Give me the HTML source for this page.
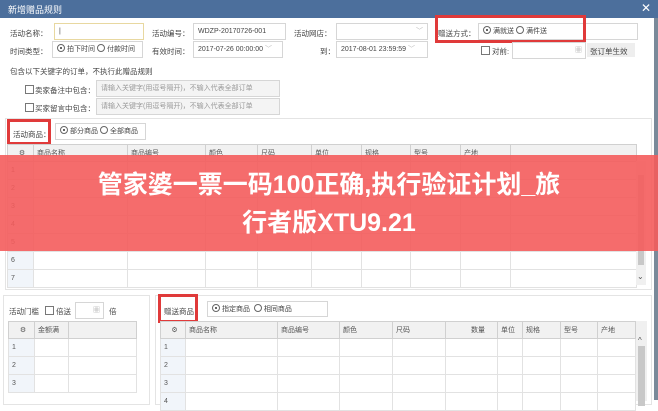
<!DOCTYPE html><html><head><meta charset="utf-8"><style>
*{margin:0;padding:0;box-sizing:border-box}
body{width:658px;height:400px;overflow:hidden;background:#fff;font-family:"Liberation Sans","Noto Sans CJK SC",sans-serif;font-size:7.5px;color:#444;position:relative}
.a{position:absolute;white-space:nowrap}
.in{position:absolute;border:1px solid #d6d6d6;background:#fff;height:17px;line-height:15px;padding-left:4px;font-size:7px;white-space:nowrap;overflow:hidden}
.g{background:#f4f4f4;color:#999}
.red{position:absolute;border:3px solid #e03a3a}
.rb{display:inline-block;width:8px;height:8px;border:1px solid #666;border-radius:50%;vertical-align:-1px;margin-right:2px;position:relative}
.rb.on:after{content:"";position:absolute;left:2px;top:2px;width:2px;height:2px;background:#333;border-radius:50%}
.cb{position:absolute;width:9px;height:9px;border:1px solid #777;background:#fff}
table{position:absolute;border-collapse:collapse;background:#fff;table-layout:fixed}
td{border:1px solid #e2e2e2;height:18px;font-size:7px;padding-left:3px;color:#555;white-space:nowrap;overflow:hidden}
tr.h td{background:#f1f1f1;border-color:#d0d0d0;height:17px}
td.n{background:#f1f5fa}
.sb{position:absolute;background:#f0f0f0}
.sb i{position:absolute;left:2px;right:2px;background:#c8c8c8}
</style></head><body>
<div class="a" style="left:0;top:0;width:658px;height:18px;background:#4c6f9c"></div>
<div class="a" style="left:8px;top:3px;color:#fff;font-size:9px">新增赠品规则</div>
<div class="a" style="left:641px;top:1px;color:#fff;font-size:12px">✕</div>
<div class="a" style="left:654px;top:18px;width:4px;height:382px;background:#7a8a9a"></div>

<div class="a" style="left:10px;top:28px">活动名称：</div>
<div class="in" style="left:54px;top:23px;width:90px;border-color:#e8d8a0">|</div>
<div class="a" style="left:152px;top:28px">活动编号：</div>
<div class="in" style="left:193px;top:23px;width:93px">WDZP-20170726-001</div>
<div class="a" style="left:294px;top:28px">活动网店：</div>
<div class="in" style="left:336px;top:23px;width:92px;text-align:right;color:#bbb;padding-right:4px">﹀</div>
<div class="a" style="left:438px;top:28px">赠送方式：</div>
<div class="in" style="left:478px;top:23px;width:160px"><span class="rb on"></span>满就送 <span class="rb"></span>满件送</div>
<div class="red" style="left:435px;top:15px;width:151px;height:28px"></div>

<div class="a" style="left:10px;top:46px">时间类型：</div>
<div class="in" style="left:52px;top:41px;width:91px"><span class="rb on"></span>拍下时间 <span class="rb"></span>付款时间</div>
<div class="a" style="left:152px;top:46px">有效时间：</div>
<div class="in" style="left:193px;top:41px;width:90px">2017-07-26 00:00:00 <span style="color:#bbb">﹀</span></div>
<div class="a" style="left:320px;top:46px">到：</div>
<div class="in" style="left:336px;top:41px;width:92px">2017-08-01 23:59:59 <span style="color:#bbb">﹀</span></div>
<div class="cb" style="left:481px;top:46px"></div>
<div class="a" style="left:492px;top:46px">对前:</div>
<div class="in" style="left:512px;top:42px;width:74px;text-align:right;color:#aaa;padding-right:3px">▦</div>
<div class="a" style="left:587px;top:43px;width:48px;height:14px;background:#eee"></div>
<div class="a" style="left:590px;top:46px">张订单生效</div>

<div class="a" style="left:10px;top:66px">包含以下关键字的订单，不执行此赠品规则</div>
<div class="cb" style="left:25px;top:85px"></div>
<div class="a" style="left:35px;top:85px">卖家备注中包含：</div>
<div class="in g" style="left:96px;top:80px;width:184px">请输入关键字(用逗号隔开)，不输入代表全部订单</div>
<div class="cb" style="left:25px;top:103px"></div>
<div class="a" style="left:35px;top:103px">买家留言中包含：</div>
<div class="in g" style="left:96px;top:98px;width:184px">请输入关键字(用逗号隔开)，不输入代表全部订单</div>

<div class="a" style="left:5px;top:118px;width:647px;height:172px;border:1px solid #e4e4e4"></div>
<div class="a" style="left:13px;top:129px">活动商品：</div>
<div class="in" style="left:55px;top:123px;width:91px"><span class="rb on"></span>部分商品 <span class="rb"></span>全部商品</div>
<div class="red" style="left:7px;top:119px;width:44px;height:26px"></div>

<table style="left:7px;top:144px;width:630px">
<tr class="h"><td style="width:26px;text-align:center;color:#555">⚙</td><td style="width:94px">商品名称</td><td style="width:78px">商品编号</td><td style="width:52px">颜色</td><td style="width:54px">尺码</td><td style="width:50px">单位</td><td style="width:49px">规格</td><td style="width:50px">型号</td><td style="width:50px">产地</td><td></td></tr>
<tr><td class="n">1</td><td></td><td></td><td></td><td></td><td></td><td></td><td></td><td></td><td></td></tr>
<tr><td class="n">2</td><td></td><td></td><td></td><td></td><td></td><td></td><td></td><td></td><td></td></tr>
<tr><td class="n">3</td><td></td><td></td><td></td><td></td><td></td><td></td><td></td><td></td><td></td></tr>
<tr><td class="n">4</td><td></td><td></td><td></td><td></td><td></td><td></td><td></td><td></td><td></td></tr>
<tr><td class="n">5</td><td></td><td></td><td></td><td></td><td></td><td></td><td></td><td></td><td></td></tr>
<tr><td class="n">6</td><td></td><td></td><td></td><td></td><td></td><td></td><td></td><td></td><td></td></tr>
<tr><td class="n">7</td><td></td><td></td><td></td><td></td><td></td><td></td><td></td><td></td><td></td></tr>
</table>
<div class="sb" style="left:636px;top:161px;width:10px;height:124px"><i style="top:14px;height:90px"></i></div>
<div class="a" style="left:637px;top:272px;font-size:8px;color:#555">⌄</div>

<div class="a" style="left:0;top:155px;width:658px;height:96px;background:rgba(244,92,92,0.9)"></div>
<div class="a" style="left:0;top:166px;width:658px;text-align:center;color:#fff;font-weight:bold;font-size:25px;line-height:38px">管家婆一票一码100正确,执行验证计划_旅<br>行者版XTU9.21</div>

<div class="a" style="left:3px;top:295px;width:147px;height:110px;border:1px solid #e4e4e4"></div>
<div class="a" style="left:155px;top:295px;width:497px;height:110px;border:1px solid #e4e4e4"></div>
<div class="a" style="left:9px;top:306px">活动门槛</div>
<div class="cb" style="left:45px;top:306px"></div>
<div class="a" style="left:56px;top:306px">倍送</div>
<div class="in" style="left:75px;top:302px;width:29px;text-align:right;color:#aaa;padding-right:3px">▦</div>
<div class="a" style="left:109px;top:306px">倍</div>
<table style="left:8px;top:321px;width:129px">
<tr class="h"><td style="width:26px;text-align:center;color:#555">⚙</td><td style="width:34px">金额满</td><td></td></tr>
<tr><td class="n">1</td><td></td><td></td></tr>
<tr><td class="n">2</td><td></td><td></td></tr>
<tr><td class="n">3</td><td></td><td></td></tr>
</table>

<div class="a" style="left:164px;top:306px">赠送商品</div>
<div class="in" style="left:207px;top:301px;width:121px;height:16px"><span class="rb on"></span>指定商品 &nbsp;<span class="rb"></span>相同商品</div>
<div class="red" style="left:158px;top:294px;width:40px;height:29px"></div>
<table style="left:160px;top:321px;width:476px">
<tr class="h"><td style="width:25px;text-align:center;color:#555">⚙</td><td style="width:92px">商品名称</td><td style="width:62px">商品编号</td><td style="width:53px">颜色</td><td style="width:53px">尺码</td><td style="width:52px;text-align:right;padding-right:12px">数量</td><td style="width:25px">单位</td><td style="width:38px">规格</td><td style="width:37px">型号</td><td>产地</td></tr>
<tr><td class="n">1</td><td></td><td></td><td></td><td></td><td></td><td></td><td></td><td></td><td></td></tr>
<tr><td class="n">2</td><td></td><td></td><td></td><td></td><td></td><td></td><td></td><td></td><td></td></tr>
<tr><td class="n">3</td><td></td><td></td><td></td><td></td><td></td><td></td><td></td><td></td><td></td></tr>
<tr><td class="n">4</td><td></td><td></td><td></td><td></td><td></td><td></td><td></td><td></td><td></td></tr>
</table>
<div class="sb" style="left:636px;top:321px;width:11px;height:80px"><i style="top:25px;height:60px"></i></div>
<div class="a" style="left:638px;top:336px;font-size:8px;color:#555">^</div>
</body></html>
